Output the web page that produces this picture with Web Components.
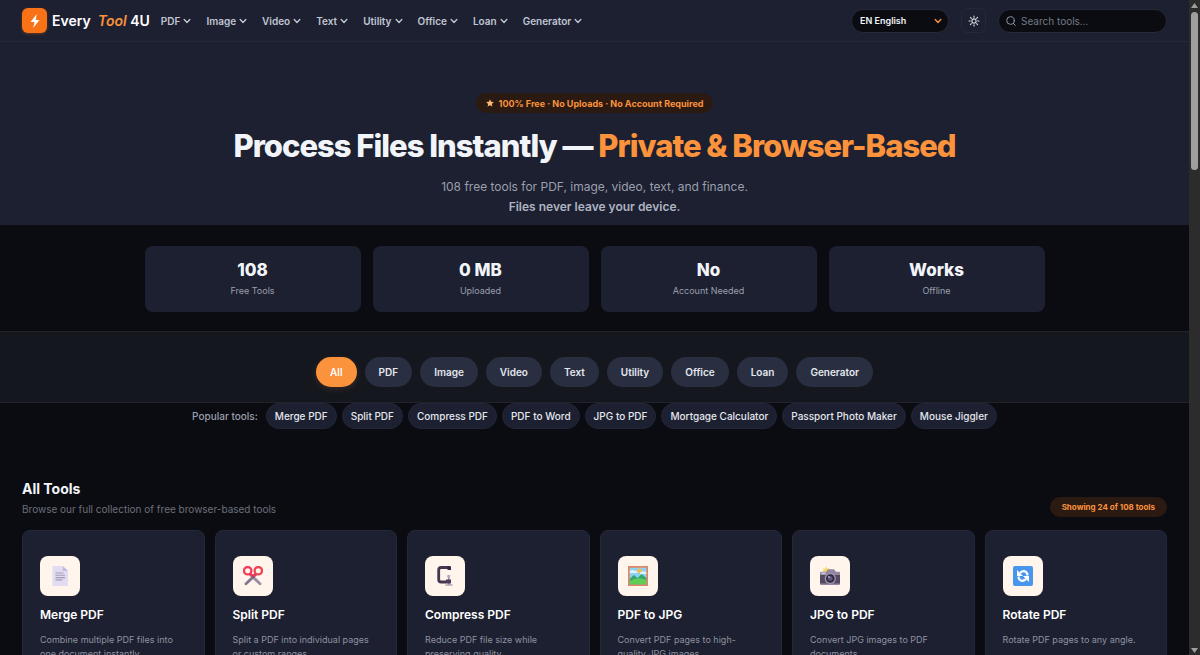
<!DOCTYPE html>
<html lang="en">
<head>
<meta charset="utf-8">
<meta name="viewport" content="width=device-width, initial-scale=1">
<title>Every Tool 4U</title>
<style>
  :root {
    --page: #0b0c11;
    --surface: #1d2030;
    --band: #15171f;
    --pill: #292f40;
    --line: #262938;
    --text: #f1f5f9;
    --muted: #9a9fae;
    --faint: #6b6f7b;
    --accent: #fb923c;
    --accent-bg: #2a1a12;
  }
  body { margin: 0; background: var(--page); color: var(--text); font-family: Inter, "Liberation Sans", sans-serif; }
</style>
</head>
<body>
<app-shell>
  <site-header>
    <nav-item>PDF</nav-item><nav-item>Image</nav-item><nav-item>Video</nav-item><nav-item>Text</nav-item><nav-item>Utility</nav-item><nav-item>Office</nav-item><nav-item>Loan</nav-item><nav-item>Generator</nav-item>
  </site-header>
  <hero-banner>
    <span slot="badge">100% Free · No Uploads · No Account Required</span>
    <span slot="title">Process Files Instantly —</span>
    <span slot="highlight">Private &amp; Browser-Based</span>
    <span slot="lead">108 free tools for PDF, image, video, text, and finance.</span>
    <span slot="promise">Files never leave your device.</span>
  </hero-banner>
  <stat-row>
    <stat-card value="108">Free Tools</stat-card>
    <stat-card value="0 MB">Uploaded</stat-card>
    <stat-card value="No">Account Needed</stat-card>
    <stat-card value="Works">Offline</stat-card>
  </stat-row>
  <filter-bar>
    <filter-pill active>All</filter-pill><filter-pill>PDF</filter-pill><filter-pill>Image</filter-pill><filter-pill>Video</filter-pill><filter-pill>Text</filter-pill><filter-pill>Utility</filter-pill><filter-pill>Office</filter-pill><filter-pill>Loan</filter-pill><filter-pill>Generator</filter-pill>
  </filter-bar>
  <popular-tools>
    <tool-chip>Merge PDF</tool-chip><tool-chip>Split PDF</tool-chip><tool-chip>Compress PDF</tool-chip><tool-chip>PDF to Word</tool-chip><tool-chip>JPG to PDF</tool-chip><tool-chip>Mortgage Calculator</tool-chip><tool-chip>Passport Photo Maker</tool-chip><tool-chip>Mouse Jiggler</tool-chip>
  </popular-tools>
  <tool-section>
    <span slot="title">All Tools</span>
    <span slot="subtitle">Browse our full collection of free browser-based tools</span>
    <span slot="count">Showing 24 of 108 tools</span>
    <tool-card icon="page" name="Merge PDF">Combine multiple PDF files into one document instantly.</tool-card>
    <tool-card icon="scissors" name="Split PDF">Split a PDF into individual pages or custom ranges.</tool-card>
    <tool-card icon="clamp" name="Compress PDF">Reduce PDF file size while preserving quality.</tool-card>
    <tool-card icon="picture" name="PDF to JPG">Convert PDF pages to high-quality JPG images.</tool-card>
    <tool-card icon="camera" name="JPG to PDF">Convert JPG images to PDF documents.</tool-card>
    <tool-card icon="rotate" name="Rotate PDF">Rotate PDF pages to any angle.</tool-card>
  </tool-section>
</app-shell>

<script>
const define = (tag, render) => customElements.define(tag, class extends HTMLElement {
  constructor() {
    super();
    this.attachShadow({ mode: "open" });
  }
  connectedCallback() {
    this.shadowRoot.innerHTML = "<style>*{box-sizing:border-box}</style>" + render(this);
  }
});

const chevron = `<svg viewBox="0 0 8 8" width="8" height="8" fill="none" stroke="currentColor" stroke-width="1.4" stroke-linecap="round" stroke-linejoin="round" aria-hidden="true"><path d="M1.2 2.6 4 5.4 6.8 2.6"/></svg>`;

const icons = {
  page: `<path d="M2.500 0h10.300L18 5v15H2.500z" fill="#e2dcf2"/><path d="M12.800 0 18 5h-5.200z" fill="#c3b7de"/><path d="M5.500 7h8M5.500 9.300h9.500M5.500 11.600h9.500M5.500 13.900h7" stroke="#a49bb9" stroke-width="1.100"/>`,
  scissors: `<path d="M7.300 8.500 17 17.800" stroke="#998fa8" stroke-width="2.800" stroke-linecap="round"/><path d="M12.700 8.500 3 17.800" stroke="#81778f" stroke-width="2.800" stroke-linecap="round"/><path d="m7 7.500 3 3 3-3" fill="none" stroke="#e93a59" stroke-width="2.600"/><circle cx="4.700" cy="4.700" r="3.700" fill="none" stroke="#f23c59" stroke-width="2.300"/><circle cx="15.300" cy="4.700" r="3.700" fill="none" stroke="#ee4350" stroke-width="2.300"/><circle cx="10" cy="11" r=".8" fill="#5d526a"/>`,
  clamp: `<path d="M14 1.500H6.200q-2.500 0-2.500 2.500v9.500q0 2.500 2.500 2.500h5" fill="none" stroke="#433750" stroke-width="2.800"/><path d="M12.500 0h2.300q1.200 0 1.200 1.200V4h-3.500z" fill="#352b40"/><path d="M13.700 9v10" stroke="#978ba4" stroke-width="1.600"/><path d="M11.600 9.500h4.200l-1 1.800h-2.200z" fill="#b6adbf"/><path d="M11 13.500h5v4h-5z" fill="#4b3d59"/><path d="M10.500 19h7" stroke="#aaa0b5" stroke-width="1.400"/>`,
  picture: `<path d="M0 0h20v20H0z" fill="#e3855e"/><path d="M1.700 1.700h16.600v16.600H1.700z" fill="#8ed2f3"/><circle cx="11.500" cy="4.700" r="2.300" fill="#f5bd45"/><path d="M1.700 5q3-2 5 0 2-.8 3 2H1.700zM12 7q2-3 4-1 1-1 2.300 0v2H12z" fill="#e0f2fb"/><path d="m1.700 13 4-4 4 3 4-4 4.600 4v6.300H1.700z" fill="#35a76a"/><path d="M1.700 15q8-5 16.600-1v4.300H1.700z" fill="#63cb58"/>`,
  camera: `<path d="M3 5.800 3.500 2l1.300 1.300L6 0l1 3 2-.9-.5 3.700z" fill="#f6d75b"/><path d="M6 5.800 8 3.300h6l2 2.500h3q1 0 1 1V18q0 1-1 1H1q-1 0-1-1V6.800q0-1 1-1z" fill="#93889f"/><path d="M0 9h20v8.500H0z" fill="#544a62"/><path d="M1.500 6.500h4v1.700h-4z" fill="#d2cadd"/><circle cx="10.300" cy="12.500" r="5.600" fill="#9f95b0"/><circle cx="10.300" cy="12.500" r="4.300" fill="#332a40"/><circle cx="10.300" cy="12.500" r="2.300" fill="#655880"/><circle cx="9" cy="11" r=".9" fill="#b9addb"/>`,
  rotate: `<rect width="20" height="20" rx="2" fill="#4895ed"/><path d="M7 6.800Q11.500 3 14.300 7.500v2M13 13.200Q8.500 17 5.700 12.500v-2" fill="none" stroke="#fff" stroke-width="2.200"/><path d="M4 4v6h6zM16 16v-6h-6z" fill="#fff"/>`
};

define("app-shell", () => `
  <style>
    :host { display: grid; grid-template-columns: minmax(0, 1fr) 11px; height: 100vh; }
    main { overflow-y: auto; scrollbar-width: none; }
  </style>
  <main><slot></slot></main>
  <scroll-rail></scroll-rail>`);

define("scroll-rail", () => `
  <style>
    :host { display: flex; flex-direction: column; align-items: center; justify-content: space-between; background: #2c2c2c; }
    .top { display: flex; flex-direction: column; align-items: center; gap: 4px; height: 26%; padding-top: 3px; width: 100%; }
    .thumb { flex: 1; width: 7px; border-radius: 4px; background: #9f9f9f; }
    svg { display: block; fill: #9f9f9f; }
    .down { margin-bottom: 2px; }
  </style>
  <div class="top"><svg width="7" height="5" viewBox="0 0 7 5"><path d="M3.500 0 7 5H0z"/></svg><div class="thumb"></div></div>
  <svg class="down" width="7" height="5" viewBox="0 0 7 5"><path d="M0 0h7L3.500 5z"/></svg>`);

define("site-header", () => `
  <style>
    :host { display: flex; align-items: center; height: 41px; padding: 0 22px; background: var(--surface); border-bottom: 1px solid var(--line); }
    .brand { display: flex; align-items: center; gap: 5px; margin-right: 11px; color: #fff; font-size: 14px; font-weight: 600; text-decoration: none; white-space: pre; }
    .mark { display: grid; place-items: center; width: 25px; height: 25px; border-radius: 6px; background: #f97316; box-shadow: 0 1px 3px #f9731655; }
    em { color: var(--accent); }
    nav { display: flex; gap: 15px; }
    .tools { display: flex; align-items: center; gap: 12px; margin-left: auto; }
    .lang { display: grid; align-items: center; color: var(--accent); }
    .lang > * { grid-area: 1 / 1; }
    .lang svg { justify-self: end; margin-right: 7px; pointer-events: none; }
    select { appearance: none; width: 98px; height: 24px; padding: 0 20px 0 8px; border: 1px solid var(--line); border-radius: 12px; background: var(--page); color: var(--text); font: 600 9px Inter, sans-serif; }
    button { display: grid; place-items: center; width: 25px; height: 25px; padding: 0; border: 1px solid #252838; border-radius: 6px; background: none; color: #d7dbe5; }
    .search { display: flex; align-items: center; gap: 5px; width: 169px; height: 24px; padding: 0 7px; border: 1px solid var(--line); border-radius: 12px; background: var(--page); color: #9095a3; }
    input { flex: 1; min-width: 0; padding: 0; border: 0; outline: 0; background: none; color: var(--text); font: 10px Inter, sans-serif; }
    input::placeholder { color: #747985; opacity: 1; }
  </style>
  <a class="brand" href="#"><span class="mark"><svg width="14" height="16" viewBox="0 0 14 16" fill="#fff" aria-hidden="true"><path d="M8.800 1 2.500 9h4L5.200 15 11.500 7H7.700z"/></svg></span><span>Every <em> Tool</em> 4U</span></a>
  <nav aria-label="Categories"><slot></slot></nav>
  <div class="tools">
    <div class="lang"><select aria-label="Language"><option>EN English</option></select>${chevron}</div>
    <button aria-label="Toggle theme"><svg width="12" height="12" viewBox="0 0 24 24" fill="none" stroke="currentColor" stroke-width="2.200" stroke-linecap="round"><circle cx="12" cy="12" r="4.200"/><path d="M12 2v2.500M12 19.500V22M2 12h2.500M19.500 12H22M4.900 4.900l1.800 1.800M17.300 17.300l1.800 1.800M4.900 19.100l1.800-1.800M17.300 6.700l1.800-1.800"/></svg></button>
    <label class="search"><svg width="10" height="10" viewBox="0 0 10 10" fill="none" stroke="currentColor" stroke-linecap="round" aria-hidden="true"><circle cx="4.500" cy="4.500" r="3.800"/><path d="m7.300 7.300 2 2"/></svg><input type="search" aria-label="Search tools" placeholder="Search tools…"></label>
  </div>`);

define("nav-item", () => `
  <style>
    :host { display: block; }
    a { display: flex; align-items: center; gap: 3px; color: #c0c5d3; font-size: 10px; font-weight: 600; text-decoration: none; }
  </style>
  <a href="#"><slot></slot>${chevron}</a>`);

define("hero-banner", () => `
  <style>
    :host { display: flex; flex-direction: column; align-items: center; padding: 51px 22px 8px; background: var(--surface); text-align: center; }
    .badge { display: flex; align-items: center; gap: 5px; height: 20px; padding: 0 10px; border-radius: 10px; background: var(--accent-bg); color: var(--accent); font-size: 9px; font-weight: 700; }
    h1 { margin: 13px 0 11px; font-size: 31px; line-height: 40px; font-weight: 800; letter-spacing: -1px; }
    .hl { color: var(--accent); }
    p { margin: 0; color: var(--muted); font-size: 12px; line-height: 20px; }
    strong { font-weight: 600; color: #aeb3c2; }
  </style>
  <div class="badge"><svg width="8" height="8" viewBox="0 0 10 10" fill="#fdba74" aria-hidden="true"><path d="m5 .3 1.400 3.100 3.400.4-2.500 2.300.7 3.400L5 7.800 2 9.500l.7-3.400L.2 3.800l3.400-.4z"/></svg><slot name="badge"></slot></div>
  <h1><slot name="title"></slot> <span class="hl"><slot name="highlight"></slot></span></h1>
  <p><slot name="lead"></slot></p>
  <p><strong><slot name="promise"></slot></strong></p>`);

define("stat-row", () => `
  <style>
    :host { display: grid; grid-template-columns: repeat(4, 1fr); gap: 12px; max-width: 900px; margin: 0 auto; padding: 21px 0 19px; }
  </style>
  <slot></slot>`);

define("stat-card", el => `
  <style>
    :host { display: block; padding: 14px 12px; border-radius: 8px; background: var(--surface); text-align: center; }
    b { display: block; font-size: 17px; line-height: 20px; font-weight: 800; }
    span { display: block; margin-top: 4px; color: var(--muted); font-size: 9px; line-height: 14px; }
  </style>
  <b>${el.getAttribute("value")}</b><span><slot></slot></span>`);

define("filter-bar", () => `
  <style>
    :host { display: flex; flex-wrap: wrap; justify-content: center; gap: 8px; padding: 25px 22px 15px; border: solid #20232e; border-width: 1px 0; background: var(--band); }
  </style>
  <slot></slot>`);

define("filter-pill", el => `
  <style>
    :host { display: block; }
    button { height: 30px; padding: 0 14px; border: 0; border-radius: 15px; background: var(--pill); color: #e3e7ee; font: 600 10px Inter, sans-serif; }
    :host([active]) button { background: var(--accent); color: #fff; box-shadow: 0 2px 6px #fb923c26; }
  </style>
  <button aria-pressed="${el.hasAttribute("active")}"><slot></slot></button>`);

define("popular-tools", () => `
  <style>
    :host { display: flex; flex-wrap: wrap; align-items: center; justify-content: center; gap: 5px; padding: 0 22px; }
    span { margin-right: 3px; color: var(--muted); font-size: 10px; font-weight: 500; }
  </style>
  <span>Popular tools:</span><slot></slot>`);

define("tool-chip", () => `
  <style>
    :host { display: block; }
    a { display: block; padding: 0 8px; border: 1px solid #232637; border-radius: 13px; background: var(--surface); color: #e3e7ee; font-size: 10px; line-height: 24px; font-weight: 500; text-decoration: none; }
  </style>
  <a href="#"><slot></slot></a>`);

define("tool-section", () => `
  <style>
    :host { display: block; padding: 50px 22px 40px; }
    header { display: flex; align-items: flex-end; justify-content: space-between; margin-bottom: 13px; }
    h2 { margin: 0; font-size: 14px; line-height: 20px; font-weight: 700; }
    p { margin: 2px 0 0; color: var(--faint); font-size: 10px; line-height: 16px; }
    .count { padding: 0 12px; border-radius: 10px; background: var(--accent-bg); color: var(--accent); font-size: 8px; line-height: 20px; font-weight: 700; }
    .grid { display: grid; grid-template-columns: repeat(6, minmax(0, 1fr)); gap: 10px; }
  </style>
  <header><div><h2><slot name="title"></slot></h2><p><slot name="subtitle"></slot></p></div><span class="count"><slot name="count"></slot></span></header>
  <div class="grid"><slot></slot></div>`);

define("tool-card", el => `
  <style>
    :host { display: block; padding: 25px 17px 20px; border: 1px solid #252838; border-radius: 8px; background: var(--surface); }
    .icon { display: grid; place-items: center; width: 40px; height: 40px; border-radius: 8px; background: #fff5ec; }
    h3 { margin: 10px 0 9px; font-size: 12px; line-height: 18px; font-weight: 600; color: #fff; }
    p { margin: 0; color: #8d92a1; font-size: 9px; line-height: 14px; }
  </style>
  <div class="icon"><svg width="20" height="20" viewBox="0 0 20 20" aria-hidden="true">${icons[el.getAttribute("icon")]}</svg></div>
  <h3>${el.getAttribute("name")}</h3>
  <p><slot></slot></p>`);
</script>
</body>
</html>
